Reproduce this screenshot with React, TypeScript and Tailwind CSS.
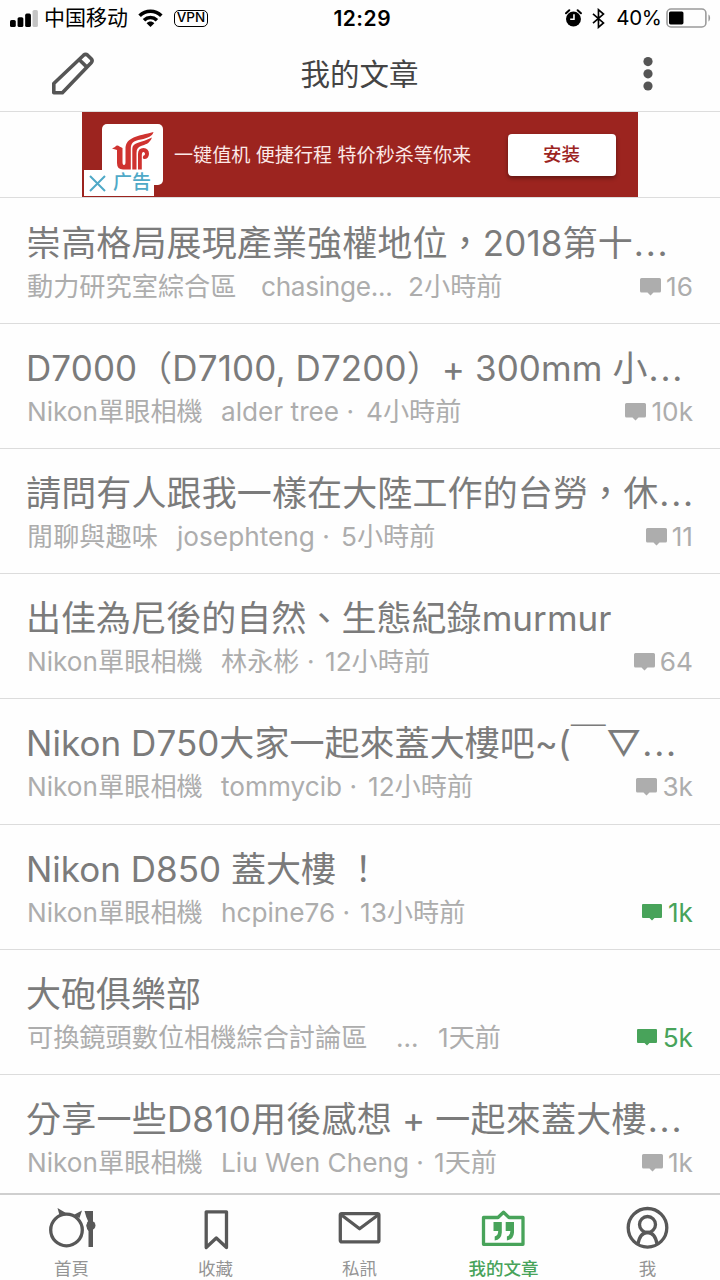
import React from 'react';
import clsx from 'clsx';

interface Post {
  title: string;
  titleClass: string;
  cut?: boolean;
  forum: string;
  forumClass: string;
  author: string;
  authorClass: string;
  time: string;
  count: string;
  unread?: boolean;
}

const posts: Post[] = [
  { title: '崇高格局展現產業強權地位，2018第十', titleClass: 'tracking-[0.13px]', cut: true, forum: '動力研究室綜合區', forumClass: 'w-[234px]', author: 'chasinge...', authorClass: 'w-[147px] tracking-[-0.3px]', time: '2小時前', count: '16' },
  { title: 'D7000（D7100, D7200）+ 300mm 小', titleClass: 'tracking-[0.1px]', cut: true, forum: 'Nikon單眼相機', forumClass: 'w-[194px]', author: 'alder tree ·', authorClass: 'w-[145px]', time: '4小時前', count: '10k' },
  { title: '請問有人跟我一樣在大陸工作的台勞，休', titleClass: 'tracking-[0.13px]', cut: true, forum: '閒聊與趣味', forumClass: 'w-[150px]', author: 'josephteng ·', authorClass: 'w-[164px]', time: '5小時前', count: '11' },
  { title: '出佳為尼後的自然、生態紀錄murmur', titleClass: 'tracking-[0.05px]', forum: 'Nikon單眼相機', forumClass: 'w-[194px]', author: '林永彬 ·', authorClass: 'w-[104px]', time: '12小時前', count: '64' },
  { title: 'Nikon D750大家一起來蓋大樓吧~(￣▽', titleClass: 'tracking-[0.05px]', cut: true, forum: 'Nikon單眼相機', forumClass: 'w-[194px]', author: 'tommycib ·', authorClass: 'w-[147px]', time: '12小時前', count: '3k' },
  { title: 'Nikon D850 蓋大樓 ！', titleClass: 'tracking-normal', forum: 'Nikon單眼相機', forumClass: 'w-[194px]', author: 'hcpine76 ·', authorClass: 'w-[139px]', time: '13小時前', count: '1k', unread: true },
  { title: '大砲俱樂部', titleClass: 'tracking-normal', forum: '可換鏡頭數位相機綜合討論區', forumClass: 'w-[369px]', author: '...', authorClass: 'w-[42px]', time: '1天前', count: '5k', unread: true },
  { title: '分享一些D810用後感想 + 一起來蓋大樓', titleClass: 'tracking-[0.22px]', cut: true, forum: 'Nikon單眼相機', forumClass: 'w-[194px]', author: 'Liu Wen Cheng ·', authorClass: 'w-[213px]', time: '1天前', count: '1k' },
];

const StatusBar: React.FC = () => (
  <div className="flex h-9 items-center pl-[10px] pr-[9px] text-black">
    <svg className="h-[18px] w-[28px]" viewBox="0 0 28 18">
      <rect x="0" y="11" width="5.8" height="7" rx="1.6" />
      <rect x="7.6" y="8.2" width="5.8" height="9.8" rx="1.6" />
      <rect x="15.2" y="4.6" width="5.8" height="13.4" rx="1.6" />
      <rect x="22.6" y="1" width="5.4" height="17" rx="1.6" fill="#c4c4c4" />
    </svg>
    <span className="ml-[6px] w-[94px] whitespace-nowrap text-[21px] leading-9">中国移动</span>
    <svg className="h-[18px] w-[25px]" viewBox="0 0 25 18" fill="none" stroke="currentColor" strokeWidth="3.6">
      <path d="M1.6 6.8C7.8 .7 17.2 .7 23.4 6.8" />
      <path d="M6 11.2C9.8 7.6 15.2 7.6 19 11.2" />
      <path d="M12.5 18L8.6 14.2C10.8 12 14.2 12 16.4 14.2Z" fill="currentColor" stroke="none" />
    </svg>
    <span className="ml-[11px] flex h-[17px] w-[35px] items-center justify-center rounded-[5px] border-[1.5px] border-black text-[13.5px] font-medium leading-none">VPN</span>
    <span className="ml-[125px] w-[57px] whitespace-nowrap pt-px text-[21px] font-semibold tracking-[0.5px]">12:29</span>
    <svg className="ml-[175px] h-[18px] w-[17px]" viewBox="0 0 17 18">
      <circle cx="8.5" cy="10" r="7.5" />
      <path d="M1 4.3L4.3 1.2M16 4.3L12.7 1.2" stroke="black" strokeWidth="2" strokeLinecap="round" />
      <path d="M9 5.3V10.2H5.2" fill="none" stroke="white" strokeWidth="1.6" />
    </svg>
    <svg className="ml-[10px] h-[21px] w-[13px]" viewBox="0 0 13 21" fill="none" stroke="currentColor" strokeWidth="1.7">
      <path d="M1 5.8L11.5 15L6.5 19.3V1.7L11.5 6L1 15.2" />
    </svg>
    <span className="ml-[11px] w-[50px] whitespace-nowrap pt-px text-[20.5px] tracking-[-0.3px]">40%</span>
    <svg className="h-[20px] w-[45px]" viewBox="0 0 45 20">
      <rect x="1" y="1" width="39" height="18" rx="4" fill="none" stroke="#9b9b9b" strokeWidth="1.6" />
      <rect x="3" y="3.4" width="14.5" height="13" rx="1.6" />
      <path d="M42.6 6.5C44.8 7.5 44.8 12.5 42.6 13.5Z" fill="#9b9b9b" />
    </svg>
  </div>
);

const Header: React.FC = () => (
  <header className="grid h-[75px] grid-cols-3 items-center pl-[51px] pr-[66px] text-[#555]">
    <svg className="h-[44px] w-[44px]" viewBox="0 0 44 44" fill="none" stroke="currentColor" strokeWidth="3.6" strokeLinejoin="round">
      <path d="M2.8 40.8V31.5L32.6 3.2Q34.6 1.4 36.6 3.2L40.2 6.8Q42 8.800 40.2 10.8L11.4 40.8Z" />
      <path d="M28.3 7.8L36.2 15.4" />
    </svg>
    <h1 className="whitespace-nowrap pl-[14px] pt-px text-center text-[29.5px] font-normal text-[#444]">我的文章</h1>
    <svg className="ml-auto h-[36px] w-[12px]" viewBox="0 0 12 36" fill="currentColor">
      <circle cx="6" cy="5.6" r="4.6" />
      <circle cx="6" cy="17.8" r="4.6" />
      <circle cx="6" cy="30" r="4.6" />
    </svg>
  </header>
);

const AdBanner: React.FC = () => (
  <div className="flex h-[87px] justify-center border-y border-[#ddd]">
    <div className="relative flex w-[556px] items-center bg-[#9c241f] pl-[20px] pr-[22px]">
      <div className="flex h-[61px] w-[61px] justify-center rounded-[5px] bg-white">
        <svg className="mt-[7px] h-[42px] w-[42px]" viewBox="0 0 42 42" fill="#cf3330">
          <path d="M0 17.500L3 16Q5 13.500 7.500 15.500L10.500 17V31Q10.500 34 12 34Q13.500 34 13.500 31V18C13.500 6 26 5 41.500 1C40.500 5 36 7 29 8.500C21 10 18.800 12 18.800 18V38.500H11Q5 38.500 5 32V19Z" />
          <path d="M20.300 38.500V18C20.300 11 29 12 40 6.500C37.500 13 33 13.500 29 15C26 16 24.500 18 24.500 22V38.500Z" />
          <path d="M26 38.500V23Q26 17 31.500 17Q37 17.500 37 23Q36.500 28.500 31.500 28Q30 26 31.500 24.500Q33 25 33 22.500Q32.500 20.500 31 21Q29.800 21.500 29.800 24V38.500Z" />
        </svg>
      </div>
      <span className="ml-[11px] whitespace-nowrap pt-px text-[19.100px] text-[#fbe9e7]">一键值机 便捷行程 特价秒杀等你来</span>
      <button className="ml-auto h-[42px] w-[108px] rounded-[4px] bg-white pr-px text-[18.5px] font-medium text-[#9c241f] shadow-[0_2px_4px_rgba(0,0,0,0.4)]">安装</button>
      <div className="absolute bottom-px left-[2px] flex h-[26px] w-[70px] items-center bg-white pl-[5px] text-[#4fa9c7]">
        <svg className="h-[17px] w-[17px]" viewBox="0 0 17 17" stroke="currentColor" strokeWidth="2">
          <path d="M1 1L16 16M16 1L1 16" />
        </svg>
        <span className="ml-[7px] whitespace-nowrap text-[19px] font-medium leading-[28px]">广告</span>
      </div>
    </div>
  </div>
);

const PostRow: React.FC<{ post: Post }> = ({ post }) => (
  <li className="h-[125.15px] shrink-0 border-b border-[#dcdcdc] pl-[27px] pr-[27px] pt-[20px]">
    <h2 className={clsx('-ml-px h-[49px] whitespace-nowrap text-[35px] font-normal leading-[49px] text-[#7b7b7b]', post.titleClass)}>
      {post.title}
      {post.cut && <span className="ml-px tracking-[1.8px]">...</span>}
    </h2>
    <div className="flex h-[38px] items-center whitespace-nowrap text-[26.2px] leading-[38px] text-[#adadad]">
      <span className={post.forumClass}>{post.forum}</span>
      <span className={post.authorClass}>{post.author}</span>
      <span>{post.time}</span>
      <span className={clsx('ml-auto flex items-center', post.unread && 'text-[#48a35a]')}>
        <svg className="mr-[5px] h-[18px] w-[21px]" viewBox="0 0 21 18" fill="currentColor">
          {post.unread ? (
            <path d="M1 0H19Q20 0 20 1V13Q20 14 19 14H12.500L10 16.500L7.500 14H1Q0 14 0 13V1Q0 0 1 0Z" />
          ) : (
            <path d="M1.500 0H19.500Q21 0 21 1.500V13Q21 14.500 19.500 14.500H13.500L10.500 17.500L7.500 14.500H1.500Q0 14.500 0 13V1.500Q0 0 1.500 0Z" />
          )}
        </svg>
        {post.count}
      </span>
    </div>
  </li>
);

const tabs = [
  {
    name: '首頁',
    icon: (
      <>
        <circle cx="17.500" cy="24" r="15.800" />
        <path d="M8.500 2L17 7L11 11ZM33 4.500L30.500 12L24.500 9Z" fill="currentColor" stroke="none" />
        <path d="M35.500 5H44V41H39.500V25Q37.500 23 37.500 19.500Q38 17 39 15Q37 11 35.500 5Z" fill="currentColor" stroke="none" />
        <circle cx="42" cy="19.500" r="4.500" fill="currentColor" stroke="none" />
      </>
    ),
  },
  { name: '收藏', icon: <path d="M13.200 5.800H33.500V41.500L23.300 32L13.200 41.500Z" /> },
  {
    name: '私訊',
    icon: (
      <>
        <rect x="3.300" y="7.600" width="38.600" height="28.300" rx="1.500" />
        <path d="M4.500 9L22.600 22.800L41 9" />
      </>
    ),
  },
  {
    name: '我的文章',
    active: true,
    icon: (
      <>
        <path d="M2.500 11.500H17L22.500 6.200L28 11.500H42V38.300H2.500Z" />
        <path d="M12.500 16H20.800V26.500Q20.400 33.500 13.700 34.500V30.500Q17.200 29.500 17.200 25H12.500ZM24.700 16H33V26.500Q32.600 33.500 25.900 34.500V30.500Q29.400 29.500 29.400 25H24.700Z" fill="currentColor" stroke="none" />
      </>
    ),
  },
  {
    name: '我',
    icon: (
      <>
        <circle cx="22.500" cy="21.800" r="19.300" />
        <circle cx="22.500" cy="18.500" r="8" />
        <path d="M13 38Q15 26.500 22.500 26.500Q30 26.500 32 38" />
      </>
    ),
  },
];

const TabBar: React.FC = () => (
  <nav className="flex h-[87px] border-t-2 border-[#cfcfcf] bg-[#fefefe]">
    {tabs.map((tab) => (
      <div
        key={tab.name}
        className={clsx('flex w-36 flex-col items-center pt-[11px]', tab.active ? 'text-[#48a35a]' : 'text-[#585858]')}
      >
        <svg className="h-[47px] w-[47px] shrink-0" viewBox="0 0 47 47" fill="none" stroke="currentColor" strokeWidth="3.3" strokeLinejoin="round">
          {tab.icon}
        </svg>
        <span className={clsx('-ml-px text-[17.500px] leading-[32px]', tab.active ? 'font-medium' : 'text-[#949494]')}>{tab.name}</span>
      </div>
    ))}
  </nav>
);

const App: React.FC = () => (
  <div className="flex h-[1280px] w-[720px] flex-col overflow-hidden bg-[#fefefe] font-[Inter,'Noto_Sans_CJK_TC',sans-serif]">
    <StatusBar />
    <Header />
    <AdBanner />
    <ul className="flex min-h-0 flex-1 flex-col overflow-hidden pt-[0.8px]">
      {posts.map((post) => (
        <PostRow key={post.title} post={post} />
      ))}
    </ul>
    <TabBar />
  </div>
);

export default App;
